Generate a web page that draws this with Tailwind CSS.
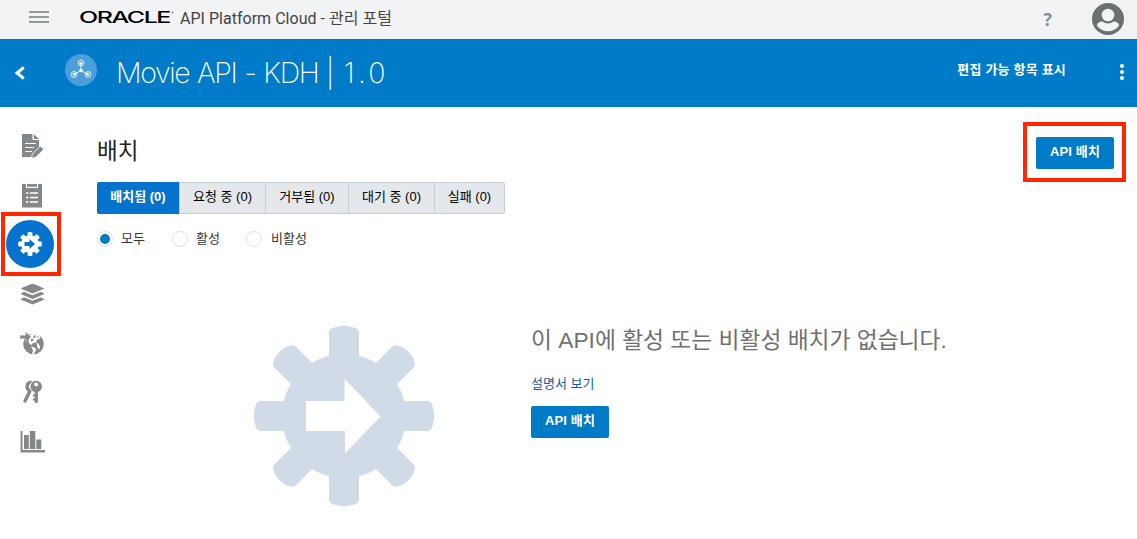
<!DOCTYPE html>
<html lang="ko">
<head>
<meta charset="utf-8">
<title>API Platform Cloud</title>
<script src="https://cdn.jsdelivr.net/npm/@tailwindcss/browser@4"></script>
</head>
<body class="h-[539px] w-[1137px] overflow-hidden bg-white font-['Liberation_Sans','Noto_Sans_CJK_KR',sans-serif] text-[13px] text-[#333]">
<header class="flex h-[39px] items-start bg-[#f2f3f5]">
  <svg class="mt-[9px] ml-[29px] h-4 w-5" viewBox="0 0 20 16" fill="#94999b"><path d="M0 2h20v2H0zM0 7h20v2H0zM0 12h20v2H0z"/></svg>
  <svg class="mt-[8px] ml-[30px] h-[20px] w-[96px]" viewBox="0 0 96 20"><text x="0" y="15" font-family="Inter, sans-serif" font-weight="500" font-size="15.5" letter-spacing="-.9" textLength="91" lengthAdjust="spacingAndGlyphs" fill="#000">ORACLE</text><circle cx="93.500" cy="4.500" r=".8" fill="#555"/></svg>
  <h1 class="mt-[7px] ml-[5px] flex h-6 items-center whitespace-nowrap font-['Roboto','Noto_Sans_CJK_KR'] text-base tracking-[0.02px] text-[#444]">API Platform Cloud - 관리 포털</h1>
  <div class="mt-[7px] mr-[40px] ml-auto h-6 font-['Open_Sans'] text-[18px] leading-6 font-bold text-[#8b9094]">?</div>
  <svg class="mt-[3px] mr-[13px] size-8" viewBox="0 0 32 32"><circle cx="16" cy="16" r="16" fill="#6b7072"/><circle cx="16" cy="12" r="6.300" fill="#f2f3f5"/><path d="M5 23c0-3 2-4.500 5.500-4.500 3 2.500 8 2.500 11 0 3.500 0 5.500 1.500 5.500 4.500-6 7-16 7-22 0z" fill="#f2f3f5"/></svg>
</header>
<div class="flex h-[68px] items-start bg-[#007bc8] text-white">
  <svg class="mt-[27px] ml-[14px] h-[14px] w-[12px]" viewBox="0 0 12 14" fill="none" stroke="#fff" stroke-width="3"><path d="M9.800 1.500 3 7l6.800 5.500"/></svg>
  <svg class="mt-[15px] ml-[39px] size-8" viewBox="0 0 32 32"><circle cx="16" cy="16" r="16" fill="#4c9edb"/><g fill="none" stroke="#fff" stroke-opacity=".85"><circle cx="16" cy="9" r="2.900"/><circle cx="9" cy="20.500" r="2.900"/><circle cx="23" cy="20.500" r="2.900"/><path d="M16 9v7.500L9 20.500M16 16.500l7 4"/></g><g fill="#fff"><circle cx="16" cy="9.300" r="1.400"/><circle cx="9.300" cy="20.300" r="1.400"/><circle cx="22.700" cy="20.300" r="1.400"/><circle cx="16" cy="16.500" r="1.700"/></g></svg>
  <h2 class="mt-[14px] ml-[19px] h-10 font-['Inter'] text-[28.500px] leading-10 font-extralight tracking-[-1.4px] [word-spacing:1.2px] whitespace-nowrap">Movie API - KDH | <span class="ml-[3px] tracking-[3.200px]">1.0</span></h2>
  <div class="mt-[21px] mr-[54px] ml-auto h-5 text-[13px] leading-5 font-bold tracking-[0.2px] whitespace-nowrap">편집 가능 항목 표시</div>
  <svg class="mt-[24px] mr-[13px] h-[18px] w-1" viewBox="0 0 4 18" fill="#fff"><circle cx="2" cy="3" r="2"/><circle cx="2" cy="9" r="2"/><circle cx="2" cy="15" r="2"/></svg>
</div>
<div class="flex h-[432px]">
  <nav class="flex w-[65px] shrink-0 flex-col text-[#84888a]">
    <svg class="mt-[25px] ml-[20px] size-[28px]" viewBox="0 0 28 28" fill="currentColor"><path d="M2 2h10.500v6H19v8.500L12.500 23v2H2z"/><path d="M13.800 2 19 7h-5.200z"/><path d="M5 11.500h11M5 15.500h9M5 19.500h7" stroke="#fff" stroke-width="1"/><path d="m12.300 22 8-8 3.600 3.300-8 8-4.400 1z" stroke="#fff" stroke-width=".8"/></svg>
    <svg class="mt-[23px] ml-[22px] h-[25px] w-[20px]" viewBox="0 0 20 25" fill="currentColor"><path d="M0 1h4v4h12V1h4v23.500H0z"/><path d="M5 1h10v2.800H5z"/><path d="M4 10h2.500M8 10h8M4 14.500h2.500M8 14.500h8M4 19h2.500M8 19h8" stroke="#fff" stroke-width="1.700"/></svg>
    <div class="mt-[4px] ml-px flex h-[64px] w-[60px] items-center justify-center border-4 border-[#ff2600]">
      <svg class="relative -left-px size-12" viewBox="-24 -24 48 48"><circle r="24" fill="#0572ce"/><g fill="#fff"><circle r="8.800"/><g id="tooth"><path d="M-2.400-7v-4.400q2.400-1.100 4.800 0V-7zM-2.400 7v4.400q2.400 1.100 4.800 0V7z"/></g><use href="#tooth" transform="rotate(45)"/><use href="#tooth" transform="rotate(90)"/><use href="#tooth" transform="rotate(135)"/></g><path d="M-5.500-2H-.5v-3L5 0-.5 5V2h-5z" fill="#0572ce"/></svg>
    </div>
    <svg class="mt-[7px] ml-[20px] h-[23px] w-[25px]" viewBox="0 0 25 23" fill="currentColor"><path d="m12.500.5 12 5-12 5-12-5zM4 8.800l8.500 3.500L21 8.800l3.500 2.300-12 5-12-5zM4 14.200l8.500 3.500 8.500-3.500 3.500 2.300-12 5-12-5z"/></svg>
    <svg class="mt-[25px] ml-[20px] h-[25px] w-[26px]" viewBox="0 0 26 25" fill="currentColor"><circle cx="13.500" cy="13" r="10.300"/><path d="m10 4 3-1.500 5 1 2.500 2.500-1 2-2.500 1-1 2.500-3 .5-1.500 2-2-1-1-3zM11 15.500l3.500 1 2 2-1.500 2.500-1.500 2.500-1.500-.5 1-3.500zM16.500 12l2 .5 1.500 3-.5 3-2-1.500z" fill="#fff"/><path d="m14 4 2 1-1 2-2-.5zM17.500 5l1.500 1-1.500 1.500zM11 8l2.500-.5L13 10l-2 .5z"/><path d="M0 4.200h5.500V.8L11.200 6l-5.700 5.200V7.800H0z" stroke="#fff" stroke-width=".3"/></svg>
    <svg class="mt-[23px] ml-[21px] h-[26px] w-[23px]" viewBox="0 0 23 26" fill="none" stroke="currentColor"><g stroke-width="3.400" stroke-linecap="round"><path d="M12 4C6 2 4 9 9 12L4 22"/></g><g stroke="#fff" stroke-width="1"><circle cx="15.200" cy="7.500" r="6.200" fill="#84888a"/></g><path d="M15.300 12v11.800" stroke-width="3.200"/><path d="M11.800 16.500h3M11.800 20.500h3" stroke-width="2"/><circle cx="15.200" cy="5.500" r="2" fill="#fff" stroke="none"/></svg>
    <svg class="mt-[26px] ml-[20px] h-[22px] w-[25px]" viewBox="0 0 25 22" fill="currentColor"><path d="M.5 0h2v19H25v2.500H.5zM4 4h4.800v14H4zM9.800 0h5.500v18H9.800zM16.300 8.500h5v9.500h-5z"/></svg>
  </nav>
  <main class="flex w-[1072px] flex-col pl-[32px]">
    <div class="flex h-[75px] items-start">
      <h3 class="mt-[27px] h-9 text-[22.500px] leading-9 text-[#222]">배치</h3>
      <div class="mt-[15px] mr-[11px] ml-auto h-[60px] w-[103px] border-4 border-[#ff2600] pt-[11px] pl-[9px]"><button class="block h-8 w-[78px] rounded-[2px] bg-[#007bc8] pb-[3px] text-[13px] leading-[29px] font-bold tracking-[0.15px] text-white">API 배치</button></div>
    </div>
    <div class="flex h-8 w-[408px] text-[13px] leading-[28px] whitespace-nowrap text-black">
      <div class="w-[82px] rounded-l-[2px] bg-[#0572ce] pt-px text-center font-bold text-white">배치됨 (0)</div>
      <div class="w-[86px] border-y border-l border-[#c4ced7] bg-[#e4e8ea] text-center">요청 중 (0)</div>
      <div class="w-[83px] border-y border-l border-[#c4ced7] bg-[#e4e8ea] text-center">거부됨 (0)</div>
      <div class="w-[86px] border-y border-l border-[#c4ced7] bg-[#e4e8ea] text-center">대기 중 (0)</div>
      <div class="w-[71px] rounded-r-[2px] border border-[#c4ced7] bg-[#e4e8ea] text-center">실패 (0)</div>
    </div>
    <div class="mt-[15px] flex h-5 items-center text-[13px] leading-5 whitespace-nowrap">
      <div class="flex w-[75px] items-center gap-[8px]"><span class="flex size-4 items-center justify-center rounded-full border border-[#dfe3e6]"><i class="size-2.5 rounded-full bg-[#007bc8]"></i></span>모두</div>
      <div class="flex w-[74px] items-center gap-[8px]"><span class="size-4 rounded-full border border-[#dfe3e6]"></span>활성</div>
      <div class="flex items-center gap-[9px]"><span class="size-4 rounded-full border border-[#dfe3e6]"></span>비활성</div>
    </div>
    <div class="mt-[77px] ml-[157px] flex">
      <svg class="size-[180px]" viewBox="-90 -90 180 180"><g fill="#d1dbe7"><circle r="62"/><g id="cog"><path d="M-15-55v-28C-15-88-8-90 0-90S15-88 15-83v28zM-15 55v28C-15 88-8 90 0 90S15 88 15 83V55z"/></g><use href="#cog" transform="rotate(90)"/><g id="diag"><path transform="rotate(45)" d="M-15-50v-34C-14-88-8-91 0-91S14-88 15-84v34zM-15 50v34C-14 88-8 91 0 91S14 88 15 84V50z"/></g><use href="#diag" transform="rotate(90)"/></g><path d="M-38-15H.500v-22.500L36.500 .5 1 37.500V15h-39z" fill="#fff"/></svg>
      <div class="ml-[97px] flex flex-col items-start whitespace-nowrap">
        <p class="-mt-[4px] h-9 text-[22.750px] leading-9 text-[#707070]">이 API에 활성 또는 비활성 배치가 없습니다.</p>
        <a class="mt-[16px] h-5 text-[13px] leading-5 text-[#145c9e]">설명서 보기</a>
        <button class="mt-[12px] h-8 w-[78px] rounded-[2px] bg-[#007bc8] pb-[3px] text-[13px] leading-[29px] font-bold tracking-[0.15px] text-white">API 배치</button>
      </div>
    </div>
  </main>
</div>
</body>
</html>
